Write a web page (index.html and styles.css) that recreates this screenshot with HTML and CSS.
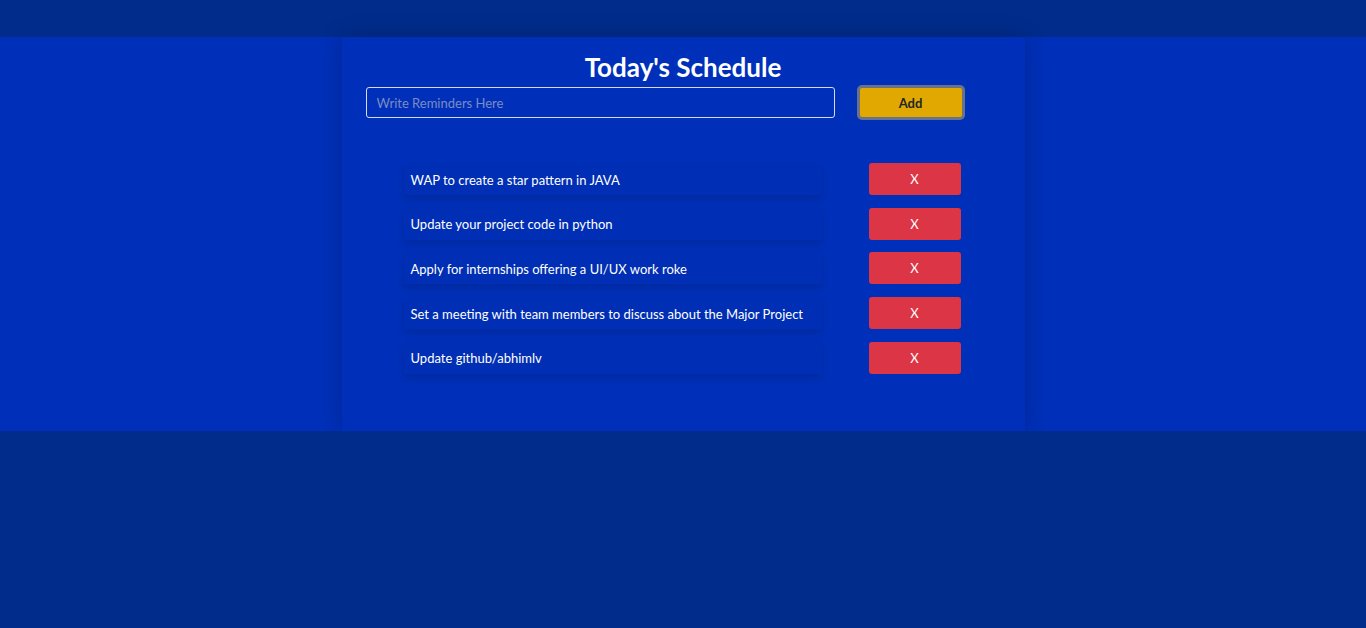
FILE: index.html
```html
<!DOCTYPE html>
<html>
<head>
<meta charset="utf-8">
<link rel="stylesheet" href="styles.css">
</head>
<body>
<div class="band">
  <div class="container">
    <h1 class="title">Today's Schedule</h1>
    <div class="form">
      <input class="input" type="text" placeholder="Write Reminders Here">
      <button class="add">Add</button>
    </div>
    <ul class="list">
      <li class="row"><span class="item">WAP to create a star pattern in JAVA</span><button class="del">X</button></li>
      <li class="row"><span class="item">Update your project code in python</span><button class="del">X</button></li>
      <li class="row"><span class="item">Apply for internships offering a UI/UX work roke</span><button class="del">X</button></li>
      <li class="row"><span class="item">Set a meeting with team members to discuss about the Major Project</span><button class="del">X</button></li>
      <li class="row"><span class="item">Update github/abhimlv</span><button class="del">X</button></li>
    </ul>
  </div>
</div>
</body>
</html>
```

FILE: styles.css
```css
html, body {
  margin: 0;
  padding: 0;
  background: #012c8c;
  font-family: Lato, "Open Sans", sans-serif;
}
.band {
  margin-top: 37px;
  height: 394px;
  background: #0030b9;
}
.container {
  width: 683px;
  height: 100%;
  margin: 0 auto;
  background: #0030b9;
  box-shadow: 0 0 22px rgba(0, 0, 0, 0.2);
  box-sizing: border-box;
  padding-top: 14px;
}
.title {
  margin: 0;
  text-align: center;
  color: #fff;
  font-size: 26px;
  font-weight: 700;
  line-height: 32px;
}
.form {
  display: flex;
  align-items: center;
  padding-left: 24px;
  margin-top: 2px;
}
.input {
  width: 469px;
  height: 31px;
  box-sizing: border-box;
  background: transparent;
  border: 1px solid #d6dcef;
  border-radius: 3px;
  padding: 0 10px;
  color: #fff;
  font-family: inherit;
  font-size: 13px;
  outline: none;
}
.input::placeholder {
  color: #7b8cc4;
}
.add {
  margin-left: 22px;
  width: 108px;
  height: 35px;
  box-sizing: border-box;
  background: #e0a800;
  border: 3px solid #6a7288;
  border-radius: 5px;
  color: #212529;
  font-family: inherit;
  font-weight: 700;
  font-size: 13px;
}
.list {
  list-style: none;
  margin: 43px 0 0 0;
  padding: 0 0 0 62px;
  display: flex;
  flex-direction: column;
  gap: 12.7px;
}
.row {
  display: flex;
  align-items: center;
  height: 32px;
}
.item {
  width: 418px;
  height: 32px;
  box-sizing: border-box;
  padding-left: 7px;
  padding-top: 1px;
  display: flex;
  align-items: center;
  background: #002eb4;
  box-shadow: 0 5px 8px rgba(0, 0, 0, 0.12);
  color: #fff;
  font-size: 13px;
}
.del {
  margin-left: 47px;
  width: 92px;
  height: 32px;
  background: #dc3545;
  border: none;
  border-radius: 3px;
  color: #fff;
  font-family: inherit;
  font-size: 13px;
}
```
